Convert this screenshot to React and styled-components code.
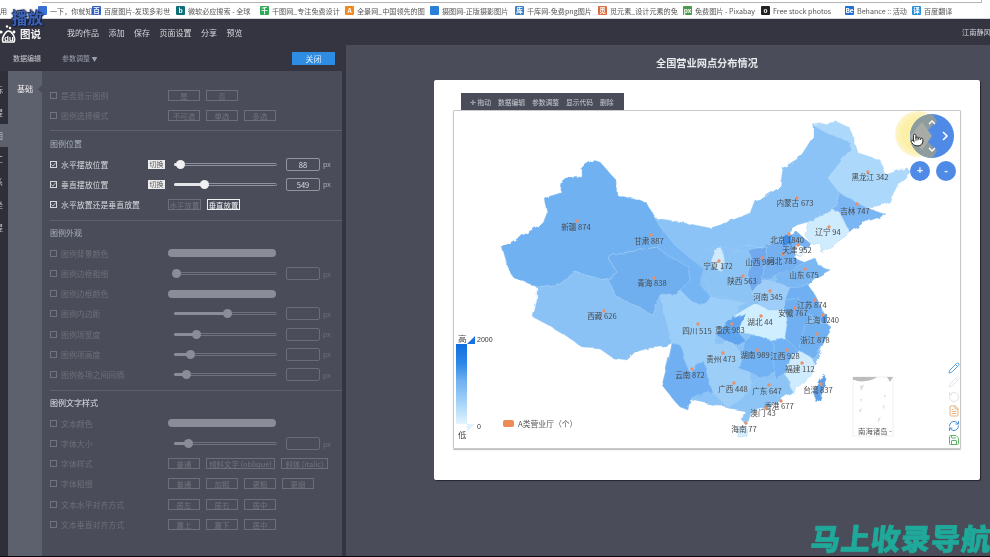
import React from 'react';
import styled, { createGlobalStyle } from 'styled-components';
import { Pencil, RotateCcw, FileText, RefreshCw, Save, Pointer } from 'lucide-react';

const Global = createGlobalStyle`
  html, body { margin: 0; padding: 0; background: #000; overflow: hidden; }
  * { box-sizing: border-box; }
`;
const FONT = `"Noto Sans CJK SC", "Liberation Sans", sans-serif`;

const Page = styled.div`
  position: relative; width: 990px; height: 557px; overflow: hidden; background: #0b0b0f;
  font-family: ${FONT}; display: flex; flex-direction: column; filter: blur(0.4px);
`;
const BookmarkBar = styled.div`
  height: 19px; flex: none; background: #fff; position: relative; display: flex; align-items: center;
  padding: 3px 0 0 0; border-bottom: 1px solid #d8d8d8; font-size: 7.1px; color: #555; white-space: nowrap; overflow: hidden;
`;
const AddressEdge = styled.div`
  position: absolute; left: 42px; width: 940px; top: 0; height: 3px; border-bottom: 1px solid #b5b5b5; border-right: 1px solid #b5b5b5;
`;
const Bookmark = styled.div`
  width: ${p => p.$w}px; flex: none; display: flex; align-items: center; gap: 3px; overflow: hidden;
`;
const Favicon = styled.span`
  width: 9px; height: 9px; flex: none; background: ${p => p.$bg}; color: #fff; font-size: 6.5px; line-height: 9px;
  text-align: center; font-weight: 700; border-radius: 1px;
`;
const NavBar = styled.div`
  height: 26px; flex: none; background: #343540; display: flex; align-items: center; color: #d6d7dc; font-size: 8px; position: relative;
`;
const LogoBox = styled.div`
  width: 68px; flex: none; height: 100%; display: flex; align-items: center; gap: 1px; padding-top: 3px; margin-left: -1px;
`;
const LogoText = styled.span`
  font-size: 10.5px; font-weight: 700; color: #f2f2f4;
`;
const PlayMark = styled.div`
  position: absolute; left: 12px; top: -12px; font-size: 15.5px; line-height: 20px; letter-spacing: 0; font-weight: 700;
  color: #3c63b8; text-shadow: 0 0 2px #14203e, 1px 1px 1px #14203e, -1px -1px 1px #1d2a4d;
`;
const NavItem = styled.span`
  margin-right: 9.5px;
`;
const NavUser = styled.span`
  margin-left: auto; font-size: 7.2px; white-space: nowrap; width: 28px; overflow: hidden;
`;
const Body = styled.div`
  height: 511px; flex: none; display: flex;
`;
const LeftPanel = styled.div`
  width: 346px; flex: none; background: #343540; display: flex; flex-direction: column;
`;
const TabRow = styled.div`
  height: 26px; flex: none; display: flex; align-items: center; padding: 0 7px 0 13px; font-size: 7px; color: #c9cad0;
`;
const ParamTab = styled.span`
  margin-left: 21px; color: #9a9eae;
  small { font-size: 6px; }
`;
const CloseBtn = styled.button`
  margin-left: auto; margin-right: 4px; width: 43px; height: 13px; border: 0; padding: 0; background: #2f8ce3; color: #dfeefc; font: 8px ${FONT};
`;
const PanelRow = styled.div`
  flex: 1; display: flex; min-height: 0; padding-right: 4px;
`;
const Strip = styled.div`
  width: 8px; flex: none; display: flex; flex-direction: column; padding-top: 7px; background: #2e2f39;
`;
const StripItem = styled.div`
  height: 23px; overflow: hidden; color: #c4c5cc; font-size: 8px; line-height: 23px; text-indent: -5px;
  background: ${p => (p.$active ? '#5d606d' : 'transparent')};
`;
const InnerTabs = styled.div`
  width: 34px; flex: none; background: #5d606d; position: relative; padding-top: 12px; text-align: center; color: #eee; font-size: 8px;
  &::after {
    content: ''; position: absolute; right: 0; top: 14px; border: 4px solid transparent; border-right-color: #4a4d59;
  }
`;
const Content = styled.div`
  flex: 1; background: #4a4d59; padding-top: 14px; padding-left: 8px;
`;
const Section = styled.div`
  border-bottom: ${p => (p.$last ? 'none' : '1px solid #5e616c')}; padding: ${p => (p.$first ? '0 0 5px' : '5.7px 0 5px')};
`;
const Heading = styled.div`
  height: 14px; line-height: 14px; margin-bottom: 3px; color: ${p => (p.$bright ? '#dfe1e6' : '#a9b0bf')}; font-size: 8px;
`;
const Row = styled.div`
  height: 20.2px; display: grid; grid-template-columns: 118px 1fr; align-items: center; position: relative;
`;
const CheckLabel = styled.div`
  display: flex; align-items: center; gap: 4px; font-size: 7.9px; white-space: nowrap;
  color: ${p => (p.$on ? '#d7d8dd' : '#6d7079')};
`;
const Check = styled.span`
  width: 7px; height: 7px; flex: none; border: 1px solid ${p => (p.$on ? '#d7d8dd' : '#71747e')};
  display: flex; align-items: center; justify-content: center;
`;
const Btns = styled.div`
  display: flex; gap: 6px;
`;
const OptBtn = styled.span`
  width: ${p => p.$w || 32}px; height: 11px; flex: none; border: 1px solid ${p => (p.$active ? '#eef0f3' : '#6c6f79')};
  color: ${p => (p.$active ? '#eef0f3' : '#71747e')}; font-size: 7.4px; line-height: 9px; text-align: center; white-space: nowrap; overflow: hidden;
`;
const Swatch = styled.div`
  width: 108px; height: 8px; border-radius: 4px; background: #8a8d98;
`;
const SliderRow = styled.div`
  display: flex; align-items: center; padding-left: 6px;
`;
const Track = styled.div`
  width: 103px; height: 3px; border: 1px solid ${p => (p.$on ? '#8f929c' : '#6f727c')}; border-radius: 2px; position: relative; flex: none; background: #4a4d59;
`;
const Fill = styled.div`
  position: absolute; left: -1px; top: -1px; height: 3px; border-radius: 2px; background: ${p => (p.$on ? '#e4e5e8' : '#8a8d98')};
`;
const Thumb = styled.div`
  position: absolute; top: -4px; width: 9px; height: 9px; margin-left: -4.5px; border-radius: 50%; background: ${p => (p.$on ? '#f0f0f2' : '#8a8d98')};
`;
const NumBox = styled.div`
  margin-left: 9px; width: 34px; height: 13px; border: 1px solid ${p => (p.$on ? '#9295a0' : '#6a6d77')}; border-radius: 2px;
  color: #dcdde2; font-size: 7.6px; line-height: 11px; text-align: center;
`;
const Px = styled.span`
  margin-left: 3px; font-size: 7px; color: ${p => (p.$on ? '#aeb0b8' : '#6d7079')};
`;
const SwitchTag = styled.span`
  position: absolute; left: 98px; width: 17px; height: 9px; background: #eeeeee; color: #555; font-size: 7px; line-height: 9px; text-align: center;
`;
const Main = styled.div`
  flex: 1; background: #4a4d59; display: flex; flex-direction: column;
`;
const Title = styled.div`
  height: 35px; flex: none; display: flex; align-items: center; padding-left: 310px; font-size: 10.2px; font-weight: 700; color: #e8e9ec;
`;
const Card = styled.div`
  margin-left: 88px; width: 546px; height: 400px; background: #fff; border-radius: 2px; padding: 13px 19px 31px;
  box-shadow: 1px 1px 1px #25262d;
`;
const Toolbar = styled.div`
  margin-left: 8px; width: 163px; height: 17px; background: #4a4d59; color: #c9cbd2; font-size: 6.8px; display: flex; align-items: center; gap: 6.8px; padding-left: 9px;
`;
const Chart = styled.div`
  position: relative; width: 508px; height: 339px; border: 1px solid #c9c9c9; box-shadow: 0 1px 1px #bbb; border-radius: 1px; overflow: hidden;
`;
const MapSvg = styled.svg`
  display: block; position: absolute; left: -1px; top: -1px; width: 508px; height: 339px;
`;
const Legend = styled.div`
  position: absolute; left: 2px; top: 223px; width: 110px; height: 105px; color: #444; font-size: 7.6px;
`;
const LegendHigh = styled.span`
  position: absolute; left: 2px; top: -2px; font-size: 8.5px;
`;
const LegendLow = styled.span`
  position: absolute; left: 2px; top: 94px; font-size: 8.5px;
`;
const LegendBar = styled.div`
  position: absolute; left: 0; top: 10px; width: 11px; height: 80px;
  background: linear-gradient(#0f6fe0, #2f88e8 25%, #6dafef 45%, #a8d5f8 75%, #e2f4ff);
`;
const LegendTri = styled.div`
  position: absolute; left: 11px; top: ${p => p.$top}px; width: 0; height: 0; border-style: solid; border-width: ${p => (p.$up ? '0 0 8px 8px' : '8px 8px 0 0')};
  border-color: ${p => (p.$up ? 'transparent transparent #1a72e0 transparent' : '#dff2ff transparent transparent transparent')};
`;
const LegendNum = styled.span`
  position: absolute; left: 21px; top: ${p => p.$top}px; font-size: 7px; color: #333; font-family: "Liberation Sans", sans-serif;
`;
const LegendItem = styled.div`
  position: absolute; left: 47px; top: 84px; display: flex; align-items: center; gap: 4px; white-space: nowrap; color: #555; font-size: 7.8px;
`;
const LegendChip = styled.span`
  width: 11px; height: 7px; border-radius: 2px; background: #ee8a55;
`;
const Tools = styled.div`
  position: absolute; right: 0; top: 251px; display: flex; flex-direction: column; gap: 2.4px; color: #5aa0dc;
  svg { display: block; }
`;
const PanBtn = styled.div`
  position: absolute; top: 50px; left: ${p => p.$left}px; width: 20px; height: 20px; border-radius: 50%; background: #4f8ae6; color: #e8f0fc;
  font: 700 11px/19px "Liberation Sans", sans-serif; text-align: center;
`;
const Hand = styled.div`
  position: absolute; left: 456px; top: 22px; color: #222; svg { display: block; fill: #fff; }
`;
const Watermark = styled.div`
  position: absolute; left: 811px; top: 517px; font-size: 29.5px; line-height: 40px; font-weight: 900; color: #1fa99a; white-space: nowrap;
  letter-spacing: 0.6px; transform: skewX(-6deg); -webkit-text-stroke: 0.6px #1fa99a;
`;

const bookmarks = [
  { w: 38, t: '用' },
  { w: 54, bg: '#3a6fd8', g: '', t: '一下，你就知道' },
  { w: 84, bg: '#2f5fc0', g: '百', t: '百度图片-发现多彩世' },
  { w: 84, bg: '#0f6f78', g: 'b', t: '微软必应搜索 - 全球' },
  { w: 85, bg: '#2eaa55', g: '千', t: '千图网_专注免费设计' },
  { w: 85, bg: '#f08a1d', g: 'A', t: '全景网_中国领先的图' },
  { w: 85, bg: '#2a80d8', g: '', t: '摄图网-正版摄影图片' },
  { w: 83, bg: '#3a7fc8', g: '库', t: '千库网-免费png图片' },
  { w: 85, bg: '#e06a3c', g: '觅', t: '觅元素_设计元素的免' },
  { w: 78, bg: '#4a9a4a', g: 'px', t: '免费图片 - Pixabay' },
  { w: 84, bg: '#222', g: 'o', t: 'Free stock photos' },
  { w: 67, bg: '#1f6fd8', g: 'Be', t: 'Behance :: 活动' },
  { w: 60, bg: '#2a8fd8', g: '译', t: '百度翻译' },
];
const navs = ['我的作品', '添加', '保存', '页面设置', '分享', '预览'];
const stripChars = ['标', '提', '图', '工', '系', '坐', '提'];

const silhouette = '660,225 745,245 763,247 797,232 812,245 800,252 795,258 805,262 815,258 818,265 830,270 815,278 808,285 815,295 823,310 825,322 832,328 825,340 815,365 792,392 750,412 728,408 690,400 662,385 672,343 660,295';
const provinces = [
  ['#70b1f2', '593,160 600,162 607,170 616,180 617,195 634,199 647,203 655,218 663,230 657,247 640,250 613,255 608,258 617,272 608,280 600,279 575,272 560,284 537,287 520,280 513,277 508,267 502,247 520,237 543,223 547,213 544,198 560,193 563,178 582,177 582,167'],
  ['#8ac2f6', '537,287 560,284 575,272 600,279 608,280 617,297 635,305 653,315 660,295 672,343 664,347 650,348 635,352 627,360 613,358 600,349 583,348 565,335 548,325 533,317 537,300'],
  ['#6fafef', '608,258 613,255 640,250 657,247 668,256 688,266 690,280 680,290 672,296 660,295 653,315 635,305 617,297 608,280 617,272'],
  ['#75b5f3', '655,218 663,230 675,245 690,258 695,262 705,270 700,285 712,298 700,305 690,300 680,290 690,280 688,266 668,256 657,247 663,230'],
  ['#8bc3f6', '655,218 680,222 710,228 720,225 750,213 755,200 763,198 780,187 783,168 800,157 813,137 813,125 827,133 850,142 850,150 828,178 840,193 833,210 808,222 797,225 783,240 763,247 745,245 735,252 720,245 705,250 695,262 690,258 675,245 663,230'],
  ['#abd8fb', '813,125 837,122 850,128 858,153 880,160 885,175 907,168 910,172 900,183 890,203 867,208 840,193 828,178 850,150 850,142 827,133'],
  ['#79b6f3', '840,193 867,208 887,215 877,218 863,223 850,233 840,213 833,210'],
  ['#cfecfe', '808,222 833,210 840,215 850,233 822,253 820,243 812,245 805,235'],
  ['#cfe9fd', '714,250 722,248 724,262 722,273 714,268 710,260'],
  ['#8dc4f6', '724,262 735,252 745,250 752,260 748,280 752,292 760,305 745,303 730,300 718,296 712,298 705,280 714,268 722,273'],
  ['#6fa9ee', '748,250 763,247 768,248 765,262 762,280 752,292 748,280 752,260'],
  ['#74b0f1', '763,247 783,240 797,232 812,245 800,252 795,258 805,262 788,272 775,275 765,285 762,280 768,248'],
  ['#7ab7f3', '790,270 805,262 815,258 818,265 830,270 815,278 808,285 790,287 775,282 775,275'],
  ['#9dcdf8', '752,292 762,280 775,282 790,287 785,300 785,310 770,310 755,305 760,305'],
  ['#cfeeff', '735,315 755,303 770,310 785,310 787,325 785,338 770,340 755,335 738,332'],
  ['#9bcef8', '672,296 680,290 690,300 700,305 712,298 730,300 745,303 735,315 730,320 716,335 715,345 705,355 695,363 690,372 685,360 680,345 672,343 660,295'],
  ['#5fa4ef', '716,335 730,320 745,313 738,332 745,340 735,345 725,340'],
  ['#6fb0f2', '672,343 680,345 685,360 690,372 695,363 705,362 708,378 718,382 712,392 700,395 690,400 688,410 680,407 672,398 662,385 666,370 669,360'],
  ['#9dcef8', '695,363 705,355 715,345 725,340 735,345 742,355 738,368 720,372 718,382 708,378 705,362'],
  ['#9dcef8', '708,378 718,382 720,372 738,368 750,372 752,385 750,392 740,400 728,408 712,392'],
  ['#6fb2f3', '742,355 745,340 755,335 770,340 775,345 773,360 775,372 760,378 750,372 738,368'],
  ['#6fb2f3', '770,340 785,338 798,350 790,360 785,375 775,380 775,372 773,360 775,345'],
  ['#8cc4f6', '750,385 760,378 775,380 785,375 790,382 792,392 780,400 765,408 750,412 746,425 742,420 745,410 728,408 740,400 750,392'],
  ['#cfecfe', '785,375 790,360 798,350 812,358 815,365 808,378 792,392 790,382'],
  ['#70b1f2', '803,325 825,322 832,328 825,340 815,358 812,358 798,350 803,335'],
  ['#6fb0f2', '785,300 798,298 803,310 815,318 803,325 803,335 798,350 785,338 787,325 785,310'],
  ['#6fb0f2', '790,287 808,285 815,295 823,310 825,322 815,318 803,310 798,298 785,300'],
  ['#4f94ea', '821,314 827,314 827,322 821,322'],
  ['#5f9ee8', '820,378 825,375 825,385 820,400 817,403 813,392'],
  ['#d4eeff', '738,428 748,426 747,436 738,437'],
  ['#3f8ce8', '783,236 792,235 792,245 782,246'],
  ['#f2faff', '796,245 803,246 802,256 795,255'],
];
const labels = [
  ['新疆 874', 576, 230, 577, 221], ['甘肃 887', 649, 244, 651, 235], ['青海 838', 652, 286, 654, 278],
  ['西藏 626', 602, 319, 604, 311], ['四川 515', 697, 334, 698, 324], ['重庆 983', 730, 333, 732, 324],
  ['云南 872', 690, 378, 692, 369], ['贵州 473', 721, 362, 723, 353], ['广西 448', 733, 392, 734, 383],
  ['广东 647', 767, 394, 769, 385], ['湖南 989', 755, 358, 757, 350], ['江西 928', 785, 359, 787, 350],
  ['福建 112', 800, 372, 802, 363], ['台湾 837', 818, 393, 821, 384], ['香港 677', 779, 409, 781, 401],
  ['澳门 43', 763, 416, 766, 408], ['海南 77', 744, 432, 746, 423], ['湖北 44', 760, 325, 761, 316],
  ['河南 345', 768, 300, 770, 291], ['安徽 767', 793, 316, 795, 308], ['江苏 874', 812, 308, 815, 300],
  ['上海 1240', 822, 323, 823, 315], ['浙江 878', 815, 343, 817, 334], ['山东 675', 804, 278, 805, 269],
  ['山西 989', 760, 265, 762, 258], ['河北 783', 782, 264, 783, 254], ['陕西 563', 742, 284, 743, 276],
  ['宁夏 172', 718, 269, 719, 261], ['北京 1840', 787, 243, 789, 234], ['天津 952', 797, 253, 798, 245],
  ['辽宁 94', 828, 235, 829, 227], ['吉林 747', 855, 214, 857, 204], ['黑龙江 342', 870, 180, 868, 172],
  ['内蒙古 673', 795, 206, 797, 198],
];

const CheckTick = () => (
  <svg width="7" height="7" viewBox="0 0 7 7"><path d="M0.5 3.5 L2.8 5.8 L6.5 1" fill="none" stroke="#e6e7ea" strokeWidth="1" /></svg>
);
const Label = ({ on, children }) => (
  <CheckLabel $on={on}><Check $on={on}>{on && <CheckTick />}</Check>{children}</CheckLabel>
);
const OptRow = ({ label, opts, on }) => (
  <Row>
    <Label on={on}>{label}</Label>
    <Btns>{opts.map(o => <OptBtn key={o.t} $w={o.w} $active={o.a}>{o.t}</OptBtn>)}</Btns>
  </Row>
);
const SwatchRow = ({ label }) => (
  <Row><Label>{label}</Label><Swatch /></Row>
);
const SliderLine = ({ label, pos, value, on, tag }) => (
  <Row>
    <Label on={on}>{label}</Label>
    {tag && <SwitchTag>切换</SwitchTag>}
    <SliderRow>
      <Track $on={on}>
        <Fill $on={on} style={{ width: pos + 'px' }} />
        <Thumb $on={on} style={{ left: pos + 'px' }} />
      </Track>
      <NumBox $on={on}>{value}</NumBox>
      <Px $on={on}>px</Px>
    </SliderRow>
  </Row>
);
const t = (...a) => a.map(x => (typeof x === 'string' ? { t: x } : x));

const Logo = () => (
  <svg width="20" height="20" viewBox="0 0 20 20">
    <circle cx="2" cy="8" r="1.6" fill="#fff" /><circle cx="8" cy="2.5" r="1.2" fill="#fff" /><circle cx="11" cy="4" r="1.2" fill="#fff" /><circle cx="15" cy="8" r="1.4" fill="#fff" />
    <path d="M4 18 C2 14 7 7 9.5 7 C13 7 17 14 15 18 Z" fill="none" stroke="#fff" strokeWidth="1.6" />
    <text x="5.3" y="16.5" fontSize="7.5" fontWeight="700" fill="#fff" fontFamily="Liberation Sans">du</text>
  </svg>
);

export default function App() {
  return (
    <Page>
      <Global />
      <BookmarkBar>
        <AddressEdge />
        {bookmarks.map((b, i) => (
          <Bookmark key={i} $w={b.w}>{b.bg && <Favicon $bg={b.bg}>{b.g}</Favicon>}{b.t}</Bookmark>
        ))}
      </BookmarkBar>
      <NavBar>
        <LogoBox><Logo /><LogoText>图说</LogoText></LogoBox>
        {navs.map(n => <NavItem key={n}>{n}</NavItem>)}
        <NavUser>江南静风</NavUser>
        <PlayMark>播放</PlayMark>
      </NavBar>
      <Body>
        <LeftPanel>
          <TabRow>
            数据编辑
            <ParamTab>参数调整 <small>▼</small></ParamTab>
            <CloseBtn>关闭</CloseBtn>
          </TabRow>
          <PanelRow>
            <Strip>
              {stripChars.map((c, i) => <StripItem key={i} $active={i === 2}>{c}</StripItem>)}
            </Strip>
            <InnerTabs>基础</InnerTabs>
            <Content>
              <Section $first>
                <OptRow label="是否显示图例" opts={t('是', '否')} />
                <OptRow label="图例选择模式" opts={t('不可选', '单选', '多选')} />
              </Section>
              <Section>
                <Heading>图例位置</Heading>
                <SliderLine label="水平摆放位置" on tag pos={5} value="88" />
                <SliderLine label="垂直摆放位置" on tag pos={29} value="549" />
                <OptRow label="水平放置还是垂直放置" on opts={[{ t: '水平放置', w: 33 }, { t: '垂直放置', w: 33, a: true }]} />
              </Section>
              <Section>
                <Heading>图例外观</Heading>
                <SwatchRow label="图例背景颜色" />
                <SliderLine label="图例边框粗细" pos={1} />
                <SwatchRow label="图例边框颜色" />
                <SliderLine label="图例内边距" pos={52} />
                <SliderLine label="图例项宽度" pos={21} />
                <SliderLine label="图例项高度" pos={15} />
                <SliderLine label="图例各项之间间隔" pos={11} />
              </Section>
              <Section $last>
                <Heading $bright>图例文字样式</Heading>
                <SwatchRow label="文本颜色" />
                <SliderLine label="字体大小" pos={13} />
                <OptRow label="字体样式" opts={[{ t: '普通' }, { t: '倾斜文字 (oblique)', w: 69 }, { t: '斜体 (italic)', w: 47 }]} />
                <OptRow label="字体粗细" opts={t('普通', '加粗', '更粗', '更细')} />
                <OptRow label="文本水平对齐方式" opts={t('居左', '居右', '居中')} />
                <OptRow label="文本垂直对齐方式" opts={t('靠上', '靠下', '居中')} />
              </Section>
            </Content>
          </PanelRow>
        </LeftPanel>
        <Main>
          <Title>全国营业网点分布情况</Title>
          <Card>
            <Toolbar>
              <span>✛ 拖动</span><span>数据编辑</span><span>参数调整</span><span>显示代码</span><span>删除</span>
            </Toolbar>
            <Chart>
              <MapSvg viewBox="453 110 508 339">
                <defs>
                  <filter id="coast" x="-5%" y="-5%" width="110%" height="110%">
                    <feTurbulence type="fractalNoise" baseFrequency="0.11" numOctaves="2" seed="4" result="n" />
                    <feDisplacementMap in="SourceGraphic" in2="n" scale="5" />
                  </filter>
                  <radialGradient id="halo">
                    <stop offset="0.7" stopColor="#fcf0a8" />
                    <stop offset="1" stopColor="#fdf6cf" />
                  </radialGradient>
                </defs>
                <g filter="url(#coast)">
                  <polygon points={silhouette} fill="#8bc3f6" />
                  {provinces.map(([c, pts], i) => (
                    <polygon key={i} points={pts} fill={c} stroke="#9fcdf6" strokeWidth="0.4" strokeLinejoin="round" />
                  ))}
                </g>
                {labels.map(([s, x, y, dx, dy]) => (
                  <g key={s}>
                    <circle cx={dx} cy={dy} r="1.7" fill="#e9906a" />
                    <text x={x} y={y} textAnchor="middle" fontSize="7.6" fill="#4a4a4a" fontFamily={FONT}>{s}</text>
                  </g>
                ))}
                <circle cx="918" cy="134" r="23" fill="url(#halo)" />
                <circle cx="932" cy="136" r="22" fill="#4f8ae6" />
                <path d="M932 114 A22 22 0 0 0 932 158 L937 151 L922 136 L937 121 Z" fill="#8f9c9e" />
                <path d="M910 136 L922 122 L932 136 L922 150 Z" fill="#a9aca6" />
                <path d="M929 124 L932 121 L935 124 M929 148 L932 151 L935 148" fill="none" stroke="#fff" strokeWidth="1.3" />
                <path d="M943 132 L947 136 L943 140" fill="none" stroke="#fff" strokeWidth="1.6" />
                <rect x="853" y="377" width="40" height="59" fill="#fff" stroke="#e4e4e4" strokeWidth="0.6" />
                <path d="M853 377 H877 C872 381 860 383 855 380 L853 380 Z M887 377 H893 L890 382 Z" fill="#bdbdbd" />
                <path d="M860 386 L864 385 L861 391 Z M860 399 L862 399 L861 402 Z M884 395 L886 395 L885 398 Z M859 410 L862 408 L860 413 Z M883 406 L885 405 L883 410 Z M878 419 L881 417 L878 423 Z" fill="#dcdcdc" />
                <text x="858" y="434" fontSize="7.4" fill="#555" fontFamily={FONT}>南海诸岛 -</text>
              </MapSvg>
              <PanBtn $left={456}>+</PanBtn>
              <PanBtn $left={482}>-</PanBtn>
              <Hand><Pointer size={14} strokeWidth={1.6} /></Hand>
              <Legend>
                <LegendHigh>高</LegendHigh>
                <LegendBar />
                <LegendTri $up $top={2} />
                <LegendTri $top={90} />
                <LegendNum $top={2}>2000</LegendNum>
                <LegendNum $top={89}>0</LegendNum>
                <LegendLow>低</LegendLow>
                <LegendItem><LegendChip />A类营业厅（个）</LegendItem>
              </Legend>
              <Tools>
                <Pencil size={12} />
                <Pencil size={12} color="#dfe5ea" />
                <RotateCcw size={12} color="#e2e2e2" />
                <FileText size={12} color="#e3b27e" />
                <RefreshCw size={12} color="#4a8ccf" />
                <Save size={12} color="#64b06a" />
              </Tools>
            </Chart>
          </Card>
        </Main>
      </Body>
      <Watermark>马上收录导航</Watermark>
    </Page>
  );
}
